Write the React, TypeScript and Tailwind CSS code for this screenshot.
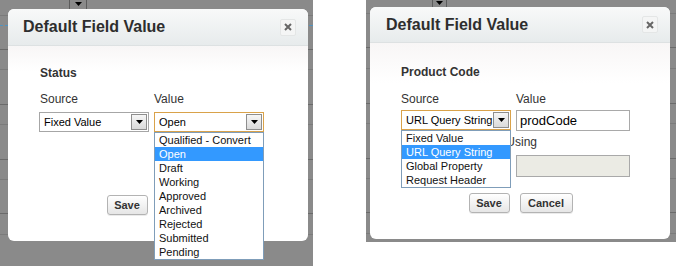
import React from 'react';

type Line = { gap: string; dark: boolean };

const leftLines: Line[] = [
  { gap: 'h-[15px]', dark: false },
  { gap: 'h-[33px]', dark: true },
  { gap: 'h-[19px]', dark: false },
  { gap: 'h-[34px]', dark: true },
  { gap: 'h-[19px]', dark: false },
  { gap: 'h-[34px]', dark: true },
  { gap: 'h-[19px]', dark: false },
  { gap: 'h-[33px]', dark: true },
  { gap: 'h-[20px]', dark: false },
];

const rightLines: Line[] = [
  { gap: 'h-[13px]', dark: false },
  { gap: 'h-[33px]', dark: true },
  { gap: 'h-[20px]', dark: false },
  { gap: 'h-[34px]', dark: true },
  { gap: 'h-[19px]', dark: false },
  { gap: 'h-[34px]', dark: true },
  { gap: 'h-[19px]', dark: false },
  { gap: 'h-[33px]', dark: true },
  { gap: 'h-[20px]', dark: false },
];

const BgLines = ({ lines }: { lines: Line[] }) => (
  <div className="flex flex-col">
    {lines.map((l, i) => (
      <React.Fragment key={i}>
        <div className={l.gap} />
        <div className={l.dark ? 'h-px bg-[#6a6a6a]' : 'h-px bg-[#7b7b7b]'} />
      </React.Fragment>
    ))}
  </div>
);

const Arrow = () => (
  <svg width="7" height="4" viewBox="0 0 7 4">
    <path d="M0 0 H7 L3.5 4 Z" fill="#000" />
  </svg>
);

const ArrowBtn = () => (
  <div className="flex items-center justify-center w-[16px] h-[16px] border border-[#8e8e8e] bg-gradient-to-b from-[#f6f6f6] to-[#dadada]">
    <Arrow />
  </div>
);

const Select = ({ value, focused, w }: { value: string; focused?: boolean; w: string }) => (
  <div
    className={`${w} h-[20px] flex items-center bg-white border ${
      focused ? 'border-[#d9a24a]' : 'border-[#a6a6a6]'
    }`}
  >
    <span className="flex-1 pl-[4px] text-[11px] text-black whitespace-nowrap overflow-hidden">{value}</span>
    <div className="pr-px">
      <ArrowBtn />
    </div>
  </div>
);

const DropList = ({ items, selected }: { items: string[]; selected: string }) => (
  <div className="absolute left-0 top-full w-full bg-white border border-[#7f9db9] z-10">
    {items.map((it) => (
      <div
        key={it}
        className={`h-[14px] leading-[14px] pl-[4px] text-[11px] whitespace-nowrap ${
          it === selected ? 'bg-[#3399ff] text-white' : 'text-[#111]'
        }`}
      >
        {it}
      </div>
    ))}
  </div>
);

const CloseBtn = () => (
  <div className="w-[16px] h-[17px] flex items-center justify-center rounded-[2px] border border-[#e4e6e6] bg-[#f4f5f5]">
    <svg width="8" height="8" viewBox="0 0 8 8">
      <path d="M1 1 L7 7 M7 1 L1 7" stroke="#666" strokeWidth="2" />
    </svg>
  </div>
);

const Header = ({ h, pl, pr }: { h: string; pl: string; pr: string }) => (
  <div
    className={`${h} ${pl} ${pr} flex items-center justify-between rounded-t-[6px] border-b border-[#dde1e2] bg-gradient-to-b from-[#f8f9f9] to-[#e7ebec]`}
  >
    <span className="text-[16px] font-bold text-[#2e2e2e]">Default Field Value</span>
    <CloseBtn />
  </div>
);

const Button = ({ label, w }: { label: string; w: string }) => (
  <div
    className={`${w} h-[20px] flex items-center justify-center rounded-[3px] border border-[#b3b3b3] bg-gradient-to-b from-white to-[#e6e6e6] text-[11px] font-bold text-[#333] shadow-[0_1px_0_rgba(0,0,0,0.08)]`}
  >
    {label}
  </div>
);

const statusItems = [
  'Qualified - Convert',
  'Open',
  'Draft',
  'Working',
  'Approved',
  'Archived',
  'Rejected',
  'Submitted',
  'Pending',
];

const sourceItems = ['Fixed Value', 'URL Query String', 'Global Property', 'Request Header'];

const App = () => {
  return (
    <div className="w-[676px] h-[266px] bg-white flex items-start font-['Liberation_Sans',Arial,sans-serif] text-[#333]">
      {/* left shot */}
      <div className="relative w-[313px] h-[266px] bg-[#8a8a8a] overflow-hidden">
        <BgLines lines={leftLines} />
        <div className="absolute left-[69px] top-0 w-[18px] h-[9px] border-x border-[#5c5c5c] flex justify-center pt-[2px]">
          <Arrow />
        </div>
        <div className="absolute left-0 top-[25px] w-[8px] border-t border-dashed border-[#4f93c0]" />
        <div className="absolute left-[309px] top-[25px] w-[4px] border-t border-[#4f93c0]" />

        <div className="absolute left-[8px] top-[9px] w-[300px] h-[232px] rounded-[6px] bg-white">
          <Header h="h-[37px]" pl="pl-[15px]" pr="pr-[12px]" />
          <div className="pl-[31px] pt-[20px] bg-gradient-to-b from-[#f8f6f6] to-white to-[30%]">
            <div className="ml-px text-[12px] leading-[14px] font-bold">Status</div>
            <div className="flex ml-px mt-[12px] text-[12px] leading-[14px]">
              <span className="w-[114px]">Source</span>
              <span>Value</span>
            </div>
            <div className="flex gap-[5px] mt-[6px]">
              <Select value="Fixed Value" w="w-[110px]" />
              <div className="relative">
                <Select value="Open" focused w="w-[110px]" />
                <DropList items={statusItems} selected="Open" />
              </div>
            </div>
          </div>
          <div className="flex justify-center gap-[10px] mt-[63px] pl-[1px]">
            <Button label="Save" w="w-[41px]" />
            <Button label="Cancel" w="w-[53px]" />
          </div>
        </div>
      </div>

      <div className="w-[53px]" />

      {/* right shot */}
      <div className="relative w-[310px] h-[242px] bg-[#8a8a8a] overflow-hidden">
        <BgLines lines={rightLines} />
        <div className="absolute left-[66px] top-0 w-[15px] h-[7px] border-x border-[#5c5c5c] flex justify-center pt-px">
          <Arrow />
        </div>

        <div className="absolute left-[4px] top-[7px] w-[300px] h-[232px] rounded-[6px] bg-white">
          <Header h="h-[36px]" pl="pl-[16px]" pr="pr-[12px]" />
          <div className="pl-[31px] pt-[22px] bg-gradient-to-b from-[#f8f6f6] to-white to-[30%]">
            <div className="text-[12px] leading-[14px] font-bold">Product Code</div>
            <div className="flex mt-[13px] text-[12px] leading-[14px]">
              <span className="w-[115px]">Source</span>
              <span>Value</span>
            </div>
            <div className="flex items-start gap-[5px] mt-[4px]">
              <div className="relative">
                <Select value="URL Query String" focused w="w-[110px]" />
                <DropList items={sourceItems} selected="URL Query String" />
              </div>
              <div className="w-[114px] h-[21px] border border-[#a9a9a9] bg-white flex items-center pl-[3px] text-[13px] text-black">
                prodCode
              </div>
            </div>
            <div className="w-[136px] mt-[4px] text-right text-[12px] leading-[14px] whitespace-nowrap">
              Value Using
            </div>
            <div className="ml-[115px] mt-[6px] w-[114px] h-[22px] border border-[#a9a9a9] bg-[#ebebe4]" />
          </div>
          <div className="flex justify-center gap-[10px] mt-[16px] pl-[1px]">
            <Button label="Save" w="w-[41px]" />
            <Button label="Cancel" w="w-[53px]" />
          </div>
        </div>
      </div>
    </div>
  );
};

export default App;
